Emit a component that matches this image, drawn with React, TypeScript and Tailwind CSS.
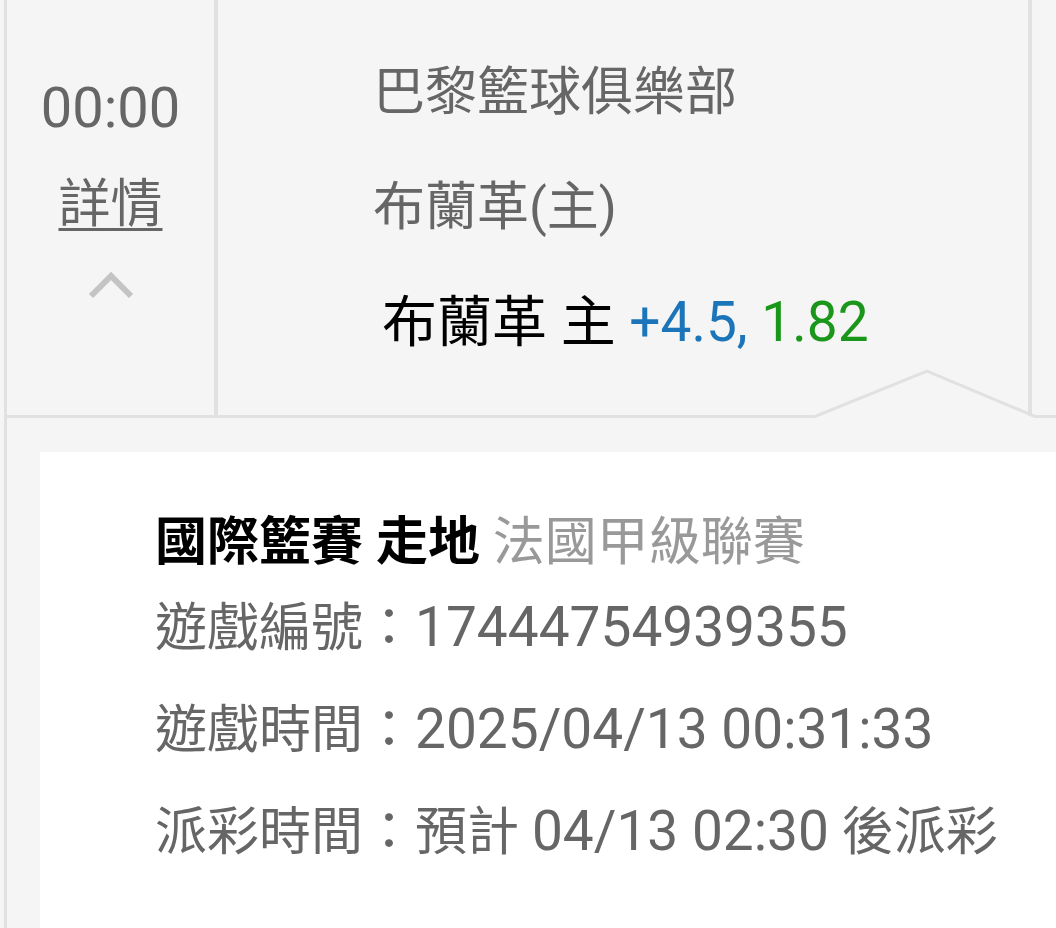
function Num({ children }: { children: React.ReactNode }) {
  return <span className="text-[55px]">{children}</span>;
}

export default function App() {
  return (
    <div
      className="w-[1056px] h-[928px] overflow-hidden bg-[#f5f5f5] pl-1"
      style={{ fontFamily: 'Roboto, "Noto Sans CJK TC", sans-serif' }}
    >
      <div className="h-full border-l-[3px] border-[#e1e1e1]">
        {/* Match row */}
        <div className="relative flex h-[418px]">
          <div className="flex w-[211px] flex-col items-center border-r-[4px] border-[#e1e1e1] pt-[78px] text-[#666]">
            <div className="text-[56px] leading-[60px]">00:00</div>
            <div className="mt-[37px] text-[52px] leading-[60px] underline decoration-[3px] underline-offset-[6px]">
              詳情
            </div>
            <svg className="mt-[35px]" width="48" height="30" viewBox="0 0 48 30">
              <polyline
                points="4,26 24,6 44,26"
                fill="none"
                stroke="#c4c4c4"
                strokeWidth="6"
              />
            </svg>
          </div>
          <div className="flex w-[814px] flex-col border-r-[4px] border-[#e1e1e1] pl-[155px] pt-[35px] text-[52px] leading-[115px]">
            <div className="text-[#666]">巴黎籃球俱樂部</div>
            <div className="text-[#666]">布蘭革(主)</div>
            <div className="pl-[9px] text-[55px] text-black">
              布蘭革 主 <span className="text-[#1b75b8]">+4.5,</span>{" "}
              <span className="text-[#1a961a]">1.82</span>
            </div>
          </div>
          <div className="flex-1" />
          <svg
            className="pointer-events-none absolute left-0 top-0"
            width="1049"
            height="418"
          >
            <polygon points="808,418 920,371 1028,418" fill="#f5f5f5" />
            <polyline
              points="0,416.5 808,416.5 920,371 1028,416.5 1049,416.5"
              fill="none"
              stroke="#e1e1e1"
              strokeWidth="3"
            />
          </svg>
        </div>

        {/* Detail card */}
        <div className="ml-[33px] mt-[34px] h-[500px] bg-white pl-[115px] pt-[57px] text-[52px] text-[#666]">
          <div className="leading-[68px]">
            <span className="font-bold text-black">國際籃賽 走地</span>{" "}
            <span className="text-[#999]">法國甲級聯賽</span>
          </div>
          <div className="leading-[100px]">
            遊戲編號：<Num>17444754939355</Num>
          </div>
          <div className="leading-[100px]">
            遊戲時間：<Num>2025/04/13 00:31:33</Num>
          </div>
          <div className="leading-[100px]">
            派彩時間：預計 <Num>04/13 02:30</Num> 後派彩
          </div>
        </div>
      </div>
    </div>
  );
}
